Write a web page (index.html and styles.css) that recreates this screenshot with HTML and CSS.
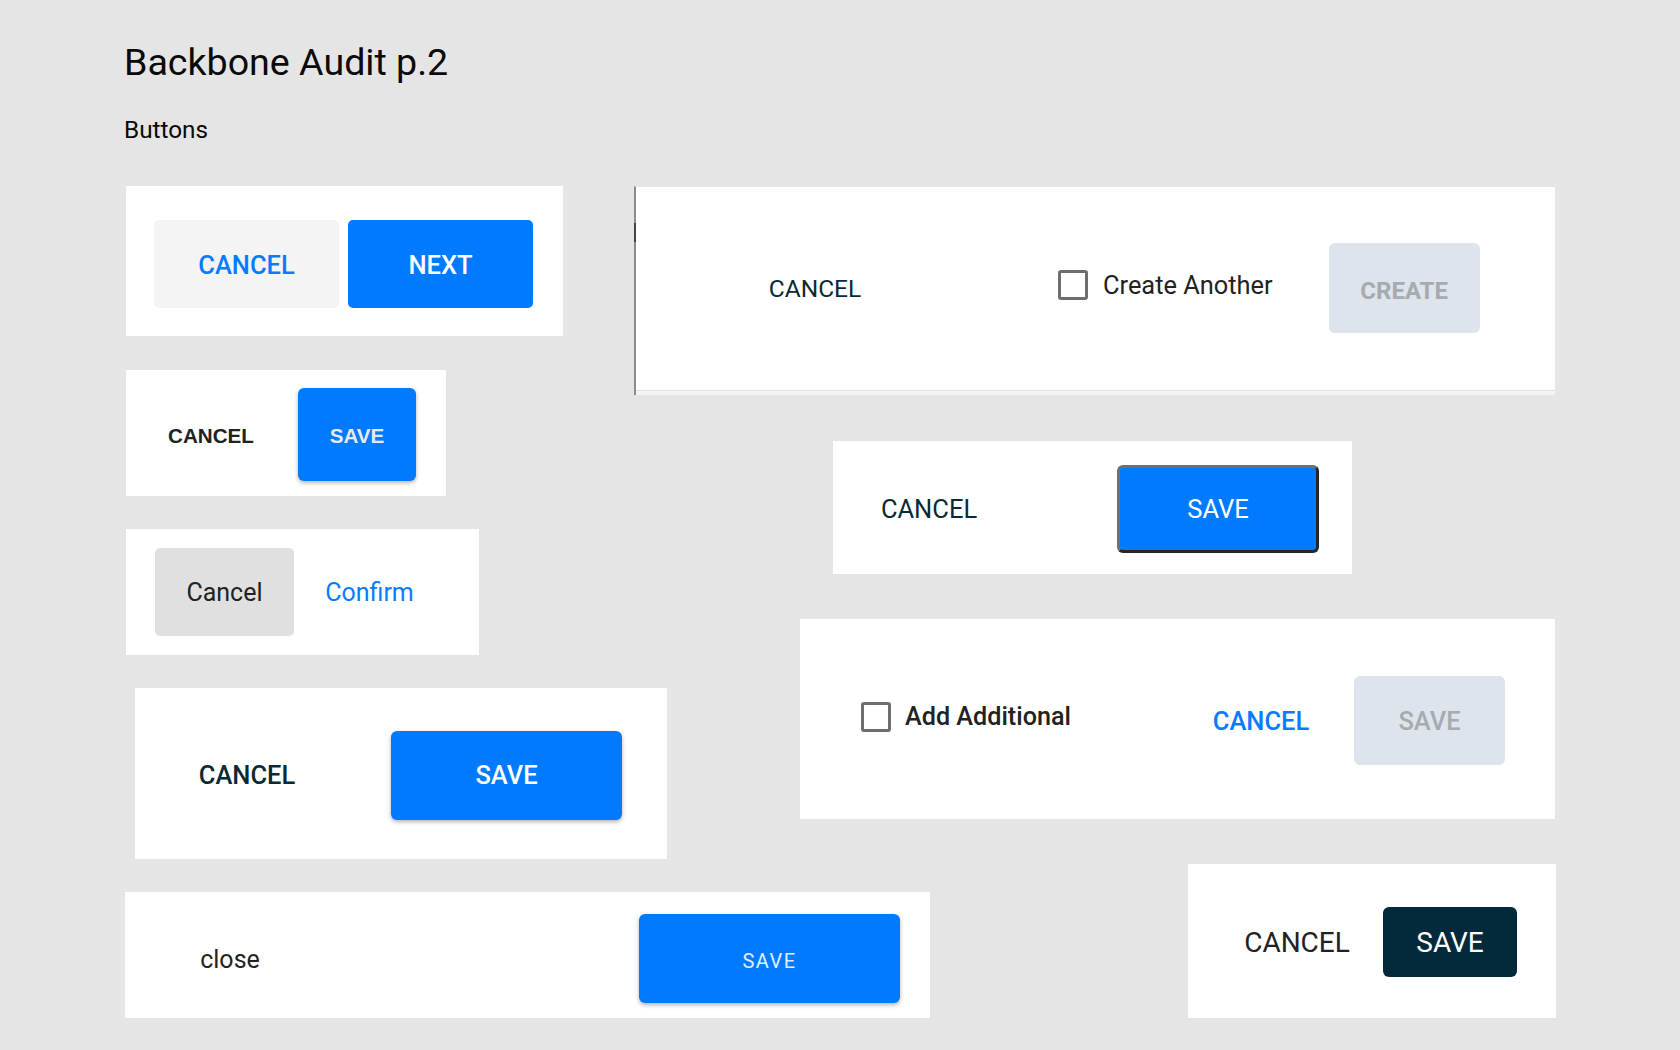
FILE: index.html
```html
<!DOCTYPE html>
<html lang="en">
<head>
<meta charset="utf-8">
<title>Backbone Audit p.2</title>
<link rel="stylesheet" href="styles.css">
</head>
<body>
<main class="page">
  <h1 class="title">Backbone Audit p.2</h1>
  <h2 class="subtitle">Buttons</h2>

  <div class="board">
    <div class="col">
      <section class="card card-1">
        <button class="btn c1-cancel">CANCEL</button>
        <button class="btn c1-next">NEXT</button>
      </section>

      <section class="card card-2">
        <button class="btn c2-cancel">CANCEL</button>
        <button class="btn c2-save">SAVE</button>
      </section>

      <section class="card card-3">
        <button class="btn c3-cancel">Cancel</button>
        <button class="btn c3-confirm">Confirm</button>
      </section>

      <section class="card card-4">
        <button class="btn c4-cancel">CANCEL</button>
        <button class="btn c4-save">SAVE</button>
      </section>

      <section class="card card-5">
        <button class="btn c5-close">close</button>
        <button class="btn c5-save">SAVE</button>
      </section>
    </div>

    <div class="col">
      <section class="card card-6">
        <span class="c6-mark"></span>
        <div class="c6-row">
          <button class="btn c6-cancel">CANCEL</button>
          <label class="check c6-check"><span class="box"></span><span class="c6-label">Create Another</span></label>
          <button class="btn c6-create">CREATE</button>
        </div>
        <div class="c6-strip"></div>
      </section>

      <section class="card card-7">
        <button class="btn c7-cancel">CANCEL</button>
        <button class="btn c7-save">SAVE</button>
      </section>

      <section class="card card-8">
        <label class="check c8-check"><span class="box"></span><span class="c8-label">Add Additional</span></label>
        <button class="btn c8-cancel">CANCEL</button>
        <button class="btn c8-save">SAVE</button>
      </section>

      <section class="card card-9">
        <button class="btn c9-cancel">CANCEL</button>
        <button class="btn c9-save">SAVE</button>
      </section>
    </div>
  </div>
</main>
</body>
</html>
```

FILE: styles.css
```css
* { box-sizing: border-box; }

html, body {
  margin: 0;
  background: #e5e5e5;
}

body {
  font-family: Roboto, "Liberation Sans", sans-serif;
  color: #111;
}

.page {
  padding: 44px 0 0 0;
}

.title {
  margin: 0 0 0 124px;
  font-size: 37.6px;
  line-height: 37px;
  font-weight: 400;
  color: #0a0a0a;
}

.subtitle {
  margin: 37px 0 0 124px;
  font-size: 24.3px;
  line-height: 23.5px;
  font-weight: 400;
  color: #0a0a0a;
}

.board {
  display: grid;
  grid-template-columns: 634px 1fr;
  margin-top: 44px;
}

.col {
  display: flex;
  flex-direction: column;
  align-items: flex-start;
}

.card {
  background: #fff;
  display: flex;
  align-items: center;
  flex-shrink: 0;
}

.btn {
  border: none;
  background: transparent;
  padding: 0;
  margin: 0;
  font-family: Roboto, "Liberation Sans", sans-serif;
  display: flex;
  align-items: center;
  justify-content: center;
  flex-shrink: 0;
  cursor: pointer;
  white-space: nowrap;
}

/* card 1 */
.card-1 {
  margin-left: 126px;
  width: 437px;
  height: 150px;
  padding: 34px 30px 28px 28px;
  gap: 9px;
  align-items: stretch;
}
.c1-cancel, .c1-next {
  width: 185px;
  height: 88px;
  border-radius: 5px;
  font-size: 25.5px;
  font-weight: 500;
  padding-top: 2px;
}
.c1-cancel { background: #f4f4f4; color: #0a7bff; }
.c1-next { background: #007bff; color: #fff; }

/* card 2 */
.card-2 {
  margin-left: 126px;
  margin-top: 34px;
  width: 320px;
  height: 126px;
  padding: 18px 30px 15px 20px;
  gap: 22px;
  align-items: stretch;
}
.c2-cancel, .c2-save {
  font-family: "Liberation Sans", Arial, sans-serif;
  font-weight: 700;
  font-size: 20.6px;
  padding-top: 4px;
}
.c2-cancel { width: 130px; color: #222; }
.c2-save {
  width: 118px;
  height: 93px;
  background: #007bff;
  color: #e9e9ea;
  border-radius: 6px;
  box-shadow: 0 2px 4px rgba(0, 0, 0, 0.3);
}

/* card 3 */
.card-3 {
  margin-left: 126px;
  margin-top: 33px;
  width: 353px;
  height: 126px;
  padding: 19px 0 19px 29px;
  gap: 6px;
}
.c3-cancel, .c3-confirm {
  width: 139px;
  height: 88px;
  font-size: 25px;
  font-weight: 400;
  padding-top: 2px;
}
.c3-cancel { background: #e0e0e0; color: #222; border-radius: 5px; }
.c3-confirm { color: #0a7bff; }

/* card 4 */
.card-4 {
  margin-left: 135px;
  margin-top: 33px;
  width: 532px;
  height: 171px;
  padding: 43px 45px 39px 32px;
  gap: 64px;
}
.c4-cancel, .c4-save {
  font-size: 25.5px;
  font-weight: 500;
}
.c4-cancel { width: 160px; color: #0a2a33; }
.c4-save {
  width: 231px;
  height: 89px;
  background: #007bff;
  color: #fff;
  border-radius: 6px;
  box-shadow: 0 2px 4px rgba(0, 0, 0, 0.3);
}

/* card 5 */
.card-5 {
  margin-left: 125px;
  margin-top: 33px;
  width: 805px;
  height: 126px;
  padding: 22px 30px 15px 35px;
  justify-content: space-between;
}
.c5-close {
  width: 140px;
  font-size: 25px;
  font-weight: 400;
  color: #222;
  padding-top: 2px;
}
.c5-save {
  width: 261px;
  height: 89px;
  background: #007bff;
  color: #e3edff;
  border-radius: 6px;
  font-size: 20px;
  letter-spacing: 1.5px;
  font-weight: 400;
  padding-top: 5px;
  box-shadow: 0 2px 4px rgba(0, 0, 0, 0.3);
}

/* checkbox */
.check {
  display: flex;
  align-items: center;
  flex-shrink: 0;
}
.box {
  width: 30px;
  height: 30px;
  border: 3px solid #6e6e6e;
  border-radius: 3px;
  background: #fff;
  flex-shrink: 0;
}

/* card 6 */
.card-6 {
  position: relative;
  width: 921px;
  height: 209px;
  border-left: 2px solid #8c8c8c;
  border-top: 1px solid #dde4ea;
  flex-direction: column;
  align-items: stretch;
}
.c6-mark {
  position: absolute;
  left: -2px;
  top: 36px;
  width: 2px;
  height: 19px;
  background: #3b4852;
}
.c6-row {
  height: 203px;
  display: flex;
  align-items: center;
  padding-left: 104px;
}
.c6-cancel {
  width: 150px;
  font-size: 24.5px;
  font-weight: 400;
  color: #0a2a33;
}
.c6-check {
  margin-left: 168px;
  gap: 15px;
  margin-bottom: 7px;
}
.c6-label {
  font-size: 25.4px;
  color: #222;
}
.c6-create {
  margin-left: 56px;
  width: 151px;
  height: 90px;
  background: #dde4ec;
  border-radius: 6px;
  color: #a7abb0;
  font-size: 24px;
  font-weight: 700;
  padding-top: 5px;
}
.c6-strip {
  height: 5px;
  border-top: 1px solid #e2e2e2;
  background: #f4f4f4;
}

/* card 7 */
.card-7 {
  margin-left: 199px;
  margin-top: 46px;
  width: 519px;
  height: 133px;
  padding: 24px 32px 21px 21px;
  gap: 113px;
}
.c7-cancel, .c7-save {
  font-size: 25.5px;
  font-weight: 400;
}
.c7-cancel { width: 150px; color: #0a2a33; }
.c7-save {
  width: 202px;
  height: 88px;
  background: #007bff;
  color: #fff;
  border-radius: 6px;
  border: 3px solid #262626;
  border-top-color: #707070;
  border-left-color: #707070;
}

/* card 8 */
.card-8 {
  margin-left: 166px;
  margin-top: 45px;
  width: 755px;
  height: 200px;
  padding: 57px 50px 54px 61px;
}
.c8-check {
  gap: 14px;
  margin-bottom: 7px;
}
.c8-label {
  font-size: 25.2px;
  font-weight: 500;
  color: #222;
}
.c8-cancel, .c8-save {
  font-size: 25.5px;
  font-weight: 500;
  padding-top: 2px;
}
.c8-cancel {
  margin-left: auto;
  width: 130px;
  color: #0a7bff;
}
.c8-save {
  margin-left: 28px;
  width: 151px;
  height: 89px;
  background: #dde4ec;
  color: #a7abb0;
  border-radius: 6px;
}

/* card 9 */
.card-9 {
  margin-left: 554px;
  margin-top: 45px;
  width: 368px;
  height: 154px;
  padding: 43px 39px 41px 44px;
  gap: 21px;
}
.c9-cancel, .c9-save {
  font-size: 28px;
  font-weight: 400;
  padding-top: 2px;
}
.c9-cancel { width: 130px; color: #222; }
.c9-save {
  width: 134px;
  height: 70px;
  background: #04293a;
  color: #fff;
  border-radius: 6px;
}
```
